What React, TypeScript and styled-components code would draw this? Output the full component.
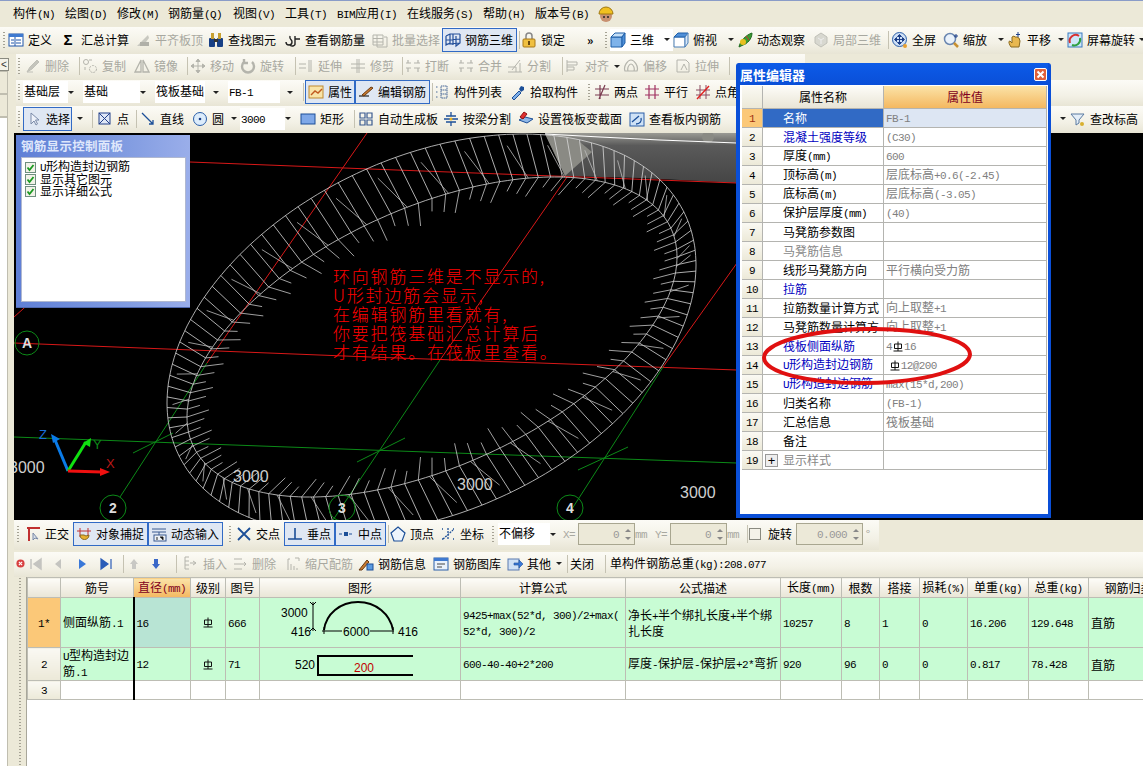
import React, { useMemo } from "react";
import styled, { createGlobalStyle } from "styled-components";

const Global = createGlobalStyle`
  html, body { margin: 0; padding: 0; background: #fff; overflow: hidden; }
  #root { width: 1143px; height: 766px; }
  * { box-sizing: border-box; }
`;

const CJK = `"Noto Sans CJK SC", "Liberation Sans", sans-serif`;

const Page = styled.div`
  position: relative; width: 1143px; height: 766px; overflow: hidden;
  background: #ece9d8; font: 12px/14px ${CJK}; color: #000;
  border-top: 1px solid #8a9cc8;
`;
const Latin = styled.span`
  font-family: "Liberation Mono", monospace; font-size: 11px; letter-spacing: -0.6px;
`;
const Label = ({ t }: { t: string }) => (
  <span>
    {t.split(/([\x20-\x7e]+)/).map((p, i) => (i % 2 ? <Latin key={i}>{p}</Latin> : p))}
  </span>
);

const MenuBar = styled.div`display: flex; align-items: center; height: 26px; padding-left: 13px;`;
const MenuItem = styled.div<{ $w: number }>`width: ${p => p.$w}px; white-space: nowrap; flex: none;`;

const Bar = styled.div<{ $h?: number; $w?: number; $ml?: number }>`
  display: flex; align-items: center; flex: none; white-space: nowrap;
  height: ${p => p.$h ?? 26}px; padding-bottom: 2px;
  width: ${p => (p.$w ? `${p.$w}px` : "auto")};
  margin-left: ${p => p.$ml ?? 0}px;
  background: linear-gradient(#fcfbf6, #f3f1e6 60%, #e8e5d5);
`;
const Grip = styled.div<{ $w: number; $x?: number }>`
  flex: none; width: ${p => p.$w}px; height: 18px; margin: 0;
  background: radial-gradient(circle, #a5a294 0.9px, transparent 1.1px) ${p => p.$x ?? 2}px 0 / 2px 3px repeat-y;
`;
const Sep = styled.div<{ $w: number }>`
  flex: none; width: ${p => p.$w}px; height: 18px; position: relative;
  &::after { content: ""; position: absolute; left: 45%; top: 0; bottom: 0; width: 1px; background: #c5c2b2; }
`;
const Tool = styled.div<{ $w: number; $on?: boolean; $off?: boolean }>`
  flex: none; display: flex; align-items: center; gap: 4px;
  width: ${p => p.$w}px; height: ${p => (p.$on ? 24 : 22)}px;
  padding-left: ${p => (p.$on ? 3 : 0)}px; padding-right: 3px;
  color: ${p => (p.$off ? "#a8a8a0" : "#000")};
  ${p => p.$on && "border: 1px solid #316ac5; background: #dfe7f3; padding-left: 2px;"}
`;
const Caret = styled.i`
  flex: none; margin-left: auto; width: 0; height: 0;
  border-left: 3px solid transparent; border-right: 3px solid transparent; border-top: 3px solid #222;
`;
const CaretSlot = styled.div<{ $w: number }>`
  flex: none; display: flex; justify-content: center; width: ${p => p.$w}px;
`;
const Combo = styled.div<{ $w: number }>`
  flex: none; display: flex; align-items: center; width: ${p => p.$w}px; height: 22px; padding-right: 9px;
`;
const ComboBox = styled.div<{ $w: number }>`
  flex: none; width: ${p => p.$w}px; height: 22px; background: #fff; padding: 3px 0 0 1px;
`;
const Fill = styled.div`flex: 1;`;
const Body = styled.div`display: flex;`;
const Dock = styled.div`
  flex: none; width: 14px; height: 712px; position: relative; padding-top: 4px;
  border: 0;
`;
const DockBtn = styled.div`
  width: 9px; height: 13px; border: 1px solid #8a8a80; border-left: 0; font: 10px/11px "Liberation Sans", sans-serif;
  text-align: center; color: #333; background: #f4f2e8;
`;
const DockTab = styled.div<{ $h: number; $bg: string }>`
  width: 8px; height: ${p => p.$h}px; background: ${p => p.$bg}; border: 1px solid #c0beb0; border-left: 0; border-top-width: 1px;
`;
const Main = styled.div`flex: 1; min-width: 0; display: flex; flex-direction: column;`;
const Canvas = styled.div`position: relative; flex: none; height: 387px; background: #000; overflow: hidden;`;
const CanvasSvg = styled.svg`display: block; width: 100%; height: 100%;`;
const Note = styled.div`
  position: absolute; left: 319px; top: 133px; color: #f00; font: 300 17px/19px ${CJK};
  letter-spacing: 1.8px; white-space: pre;
`;
const Panel = styled.div`
  position: absolute; left: 2px; top: 2px; width: 174px; height: 173px;
  background: linear-gradient(90deg, #5f7fd6, #7f9ae0 60%, #9aaeea); padding: 0 4px 5px 5px;
  border-bottom: 1px solid #4f68b0; display: flex; flex-direction: column;
`;
const PanelTitle = styled.div`
  height: 22px; font: 700 12.5px/22px ${CJK}; color: #dfe7fb; letter-spacing: 0.3px; padding-left: 0;
`;
const PanelBody = styled.div`
  flex: 1; background: #fff; border: 1px solid #b0b8d0; padding: 3px 0 0 3px;
`;
const CheckRow = styled.div`
  display: flex; align-items: center; gap: 4px; height: 12px; white-space: nowrap;
  & > span { display: block; line-height: 12px; }
`;
const Check = styled.div`
  flex: none; width: 11px; height: 11px; border: 1px solid #6f8f7f; background: #f2f2e8;
  display: flex; align-items: center; justify-content: center;
`;

const Spin = styled.div<{ $w: number }>`
  flex: none; display: flex; align-items: center; justify-content: flex-end; width: ${p => p.$w}px; height: 22px;
  border: 1px solid #a8a690; background: #ece9d8; color: #999; padding-right: 3px; gap: 6px;
`;
const SpinArrows = styled.div`display: flex; flex-direction: column; gap: 5px;`;
const Up = styled.i`width: 0; height: 0; border-left: 3px solid transparent; border-right: 3px solid transparent; border-bottom: 3px solid #888;`;
const Dn = styled.i`width: 0; height: 0; border-left: 3px solid transparent; border-right: 3px solid transparent; border-top: 3px solid #888;`;
const Faint = styled.div<{ $w: number }>`flex: none; width: ${p => p.$w}px; color: #a8a8a0;`;
const Box = styled.div`flex: none; width: 12px; height: 12px; border: 1px solid #8a8a80; background: #f4f2e8; margin-right: 7px;`;

const TablePane = styled.div`display: flex; flex: 1; min-height: 0; background: #fff;`;
const TableGrip = styled.div`
  flex: none; width: 13px; background: #ece9d8 radial-gradient(circle, #a5a294 0.9px, transparent 1.1px) 5px 0 / 2px 3px repeat-y;
  border-right: 1px solid #a9a79a;
`;
const Sheet = styled.table`
  table-layout: fixed; border-collapse: collapse; width: 1141px; flex: none; height: 121px;
  font-size: 12px; line-height: 13px;
  th, td { border: 1px solid #bdbdb4; padding: 0 2px; overflow: hidden; white-space: nowrap; font-weight: 400; }
`;
const Head = styled.th<{ $hot?: boolean }>`
  height: 20px; text-align: center;
  background: ${p => (p.$hot ? "linear-gradient(#fbe3a8, #f4b860)" : "linear-gradient(#fdfcf8, #e9e5d6)")};
  color: ${p => (p.$hot ? "#800020" : "#000")};
`;
const Num = styled.td<{ $hot?: boolean }>`
  text-align: center;
  background: ${p => (p.$hot ? "#fbc878" : "linear-gradient(#faf9f3, #ece9d8)")};
`;
const Cell = styled.td<{ $bg?: string; $center?: boolean; $freeze?: boolean }>`
  background: ${p => p.$bg ?? "#c8fcd4"};
  text-align: ${p => (p.$center ? "center" : "left")};
  ${p => p.$freeze && "border-left: 2px solid #000 !important;"}
`;
const ShapeSvg = styled.svg`display: block; width: 201px; margin-left: -2px;`;

const Win = styled.div`
  position: absolute; left: 736px; top: 62px; width: 315px; height: 455px;
  background: #0a4fd8; border: 4px solid #0a4fd8; border-top: 0; border-radius: 3px 3px 0 0; border-right-width: 3px;
  display: flex; flex-direction: column;
`;
const WinTitle = styled.div`
  flex: none; height: 22px; display: flex; align-items: center; justify-content: space-between;
  background: linear-gradient(#0c5be8, #0a4fd8); color: #fff; font: 700 13px/22px ${CJK}; padding-right: 1px; padding-top: 1px;
`;
const WinClose = styled.div`
  width: 13px; height: 13px; border: 1px solid #fff; border-radius: 2px; background: #e2603a; position: relative;
`;
const WinBody = styled.div`flex: 1; background: #fff; padding: 1px 2px 0 2px;`;
const PropRow = styled.div<{ $h?: number }>`
  display: grid; grid-template-columns: 21px 121px 163px; height: ${p => p.$h ?? 19}px; width: 305px;
`;
const PropCell = styled.div<{ $bg?: string; $c?: string; $pl?: number; $center?: boolean }>`
  border-right: 1px solid #b4b4b0; border-bottom: 1px solid #b4b4b0; white-space: nowrap; overflow: hidden;
  line-height: 18px; display: flex; align-items: center; 
  justify-content: ${p => (p.$center ? "center" : "flex-start")};
  background: ${p => p.$bg ?? "#fff"}; color: ${p => p.$c ?? "#000"}; padding-left: ${p => p.$pl ?? 0}px;
`;
const Plus = styled.div`
  width: 13px; height: 13px; margin-left: -18px; margin-right: 5px; border: 1px solid #999; background: #eee;
  font: 13px/11px "Liberation Sans", sans-serif; text-align: center; color: #000;
`;
const Oval = styled.svg`position: absolute; left: 755px; top: 318px; width: 225px; height: 75px; pointer-events: none;`;
const Glyphs = styled.span`display: inline-flex; align-items: center; gap: 1px;`;

const Rebar = () => (
  <svg width="10" height="11" viewBox="0 0 10 11" style={{ display: "block" }}>
    <path d="M1.500 3h7v4.500h-7zM5 0.500V10M0.500 10h9" fill="none" stroke="#111" strokeWidth="1" />
  </svg>
);

const sw = { fill: "none", strokeWidth: 1 } as const;
function icon(n: string): React.ReactNode {
  const g = "#b4b4ac";
  switch (n) {
    case "def": return <><rect x="1" y="2" width="14" height="12" fill="#fff" stroke="#1f55a8" /><rect x="1" y="2" width="14" height="3" fill="#3f7ad0" /><path d="M3 8h3M3 11h3M8 8h5M8 11h5M7 5v9" stroke="#1f55a8" /></>;
    case "flush": return <><path d="M2 14 13 3l1 3-6 8z" fill="#c8c8c0" /><rect x="5" y="10" width="9" height="4" fill="#b0b0a8" /></>;
    case "binoc": return <><rect x="1" y="6" width="6" height="9" rx="1" fill="#173f85" /><rect x="9" y="6" width="6" height="9" rx="1" fill="#173f85" /><rect x="3" y="1" width="3" height="6" fill="#c8a030" /><rect x="10" y="1" width="3" height="6" fill="#c8a030" /><rect x="6" y="7" width="4" height="3" fill="#333" /></>;
    case "look": return <path d="M1 10a3 3 0 1 0 6 0c0-3-3-2-2-6M10 4v7a2.500 2.500 0 0 1-5 1M10 7h5" {...sw} stroke="#222" strokeWidth={1.4} />;
    case "batch": return <path d="M1 3h10v10H1zM1 6.500h10M1 10h10M5 3v10M12 5h3v10H5v-2" {...sw} stroke={g} />;
    case "grid3": return <path d="M1 4 5 2h10M1 4v9l4-2V2M1 8l14-1M1 12l14-1M15 2v9L11 14V4M8 2v11" {...sw} stroke="#234f9a" strokeWidth={1.2} />;
    case "lock": return <><path d="M5 7V4a3 3 0 0 1 6 0v3" {...sw} stroke="#888" strokeWidth={1.5} /><rect x="2" y="7" width="12" height="8" rx="1" fill="#f0c040" stroke="#a87818" /><rect x="7" y="9" width="2" height="4" fill="#6a4a10" /></>;
    case "cube": return <><path d="M1 5h11v10H1z" fill="#7fb3ea" stroke="#1f5fa8" /><path d="M1 5l4-4h10L12 5z" fill="#c6e0f8" stroke="#1f5fa8" /><path d="M12 5l3-4v10l-3 4z" fill="#4f8fd8" stroke="#1f5fa8" /></>;
    case "cube2": return <><path d="M1 5h11v10H1z" fill="#fff" stroke="#4a7fb8" /><path d="M1 5l4-4h10L12 5z" fill="#4f8fd8" stroke="#1f5fa8" /><path d="M12 5l3-4v10l-3 4z" fill="#d8e8f8" stroke="#4a7fb8" /></>;
    case "orbit": return <><path d="M2 15C3 9 9 3 15 1c0 6-5 11-9 12z" fill="#3c9a30" stroke="#1f6a20" /><circle cx="6" cy="10" r="3" fill="#e8c020" /><path d="M9 4l3 4" stroke="#c33" /></>;
    case "part": return <><path d="M8 1l6 4v6l-6 4-6-4V5z" fill="#d8d8d0" stroke="#c0c0b8" /><path d="M5 6l3 2 3-2M8 8v4" {...sw} stroke="#eee" /></>;
    case "full": return <><circle cx="7.500" cy="7.500" r="7" fill="#cfe0f5" stroke="#2a5ea8" /><path d="M7.500 3v9M3 7.500h9M7.500 2.500l-2 2h4zM7.500 12.500l-2-2h4zM2.500 7.500l2-2v4zM12.500 7.500l-2-2v4z" fill="#1c3f88" stroke="#1c3f88" /><circle cx="13" cy="14" r="2" fill="#e8a030" /></>;
    case "zoom": return <><circle cx="7" cy="7" r="5.500" fill="#eaf2fb" stroke="#6a86b0" strokeWidth={1.5} /><path d="M11 11l4 4" stroke="#c89030" strokeWidth={2.5} /><path d="M13 2v4M11 4h4" stroke="#1c3f88" /></>;
    case "pan": return <><path d="M4 15c-2-3-3-6-1-6l2 2V5l2-1 1 1 2 0 2 1 1 3-1 6z" fill="#e8b850" stroke="#8a6a20" /><path d="M11 0v5M9 2.500h4" stroke="#1c3f88" /></>;
    case "rot3": return <><rect x="1" y="1" width="14" height="14" fill="#cfe6f8" stroke="#3a7ac0" /><path d="M3 11A6 6 0 0 1 12 4" {...sw} stroke="#d83030" strokeWidth={2} /><path d="M13 6a6 6 0 0 1-8 7" {...sw} stroke="#30a040" strokeWidth={2} /></>;
    case "erase": return <path d="M2 14l3-5 7-7 2 2-7 7zM2 14h6" fill="#c4c4bc" stroke="#c0c0b8" />;
    case "copy": return <><circle cx="4" cy="4" r="2.500" {...sw} stroke={g} /><circle cx="11" cy="11" r="3.500" {...sw} stroke={g} strokeDasharray="2 1" /><path d="M7 2h3M3 9v3" {...sw} stroke={g} /></>;
    case "mirror": return <path d="M7 2 1 14h6zM9 2l6 12H9z" {...sw} stroke={g} strokeWidth={1.3} />;
    case "move": return <path d="M8 1v14M1 8h14M8 1 6 3.500h4zM8 15l-2-2.500h4zM1 8l2.500-2v4zM15 8l-2.500-2v4z" fill={g} stroke={g} />;
    case "rot": return <path d="M12 4A6 6 0 1 1 4 4M4 1v4h4" {...sw} stroke={g} strokeWidth={2.4} />;
    case "extend": return <path d="M1 6h7M1 10h7M11 2v12M13 2v12" {...sw} stroke={g} />;
    case "trim": return <path d="M1 6h14M1 10h14M7 1v14M9 1v14" {...sw} stroke={g} />;
    case "break": return <path d="M1 5h5M9 5h6M1 10h5M9 10h6M3 2v3M13 2v3M3 10v4M13 10v4" {...sw} stroke={g} strokeWidth={1.2} />;
    case "split": return <path d="M1 14h14M1 9h8M13 2l-8 10M9 14v-5M13 5v9" {...sw} stroke={g} />;
    case "align": return <path d="M2 2v12M2 4h10v3H2M2 9h7v3H2" {...sw} stroke={g} />;
    case "offset": return <path d="M2 13c-2-5 3-11 6-11s8 6 6 11zM5 13c-1-3 1-7 3-7s4 4 3 7z" {...sw} stroke={g} strokeWidth={1.2} />;
    case "stretch": return <path d="M2 2h9l3 3v9H2zM6 12l3-6 3 6" {...sw} stroke={g} />;
    case "prop": return <><rect x="1" y="2" width="14" height="12" fill="#f8e4a8" stroke="#c08a30" /><path d="M3 11l4-4 3 2 4-4" {...sw} stroke="#c05a20" strokeWidth={1.4} /></>;
    case "edit": return <><path d="M1 12h10" stroke="#222" strokeWidth={1.2} /><path d="M4 11 13 3l2 1-9 8z" fill="#c97a30" stroke="#6a3a10" /></>;
    case "list": return <path d="M2 3h2M2 8h2M2 13h2M7 2h6v12H7zM7 6h6M7 10h6" {...sw} stroke="#4a6a98" strokeDasharray="1.500 0.500" />;
    case "pick": return <><path d="M2 14l7-7 2 2-7 7z" fill="#7fb0e8" stroke="#1c4f98" /><path d="M9 5l2-3 3 1 0 3-3 2z" fill="#1c4f98" /></>;
    case "two": return <path d="M1 5h14M1 11h14M6 1v14M11 1 5 15" {...sw} stroke="#7a3a50" strokeWidth={1.2} />;
    case "par": return <path d="M1 5h14M1 11h14M5 1v14M11 1v14" {...sw} stroke="#a03060" strokeWidth={1.2} />;
    case "ang": return <><path d="M1 6h14M1 11h14M5 1v14M11 1v14" {...sw} stroke="#8a4a60" /><path d="M2 15 14 2" stroke="#e02020" strokeWidth={1.4} /></>;
    case "cursor": return <path d="M5 2v11l3-3 2 4 1.500-1-2-4h3.500z" fill="#eef2fa" stroke="#7a8aa8" />;
    case "pt": return <><rect x="2" y="2" width="11" height="11" fill="#dfe7f6" stroke="#22408a" /><path d="M2 2l11 11M13 2 2 13" stroke="#22408a" /></>;
    case "line": return <path d="M2 2l11 11M13 9v4H9" {...sw} stroke="#1c4f98" strokeWidth={1.3} />;
    case "circ": return <><circle cx="8" cy="8" r="6.500" fill="#dcecfb" stroke="#2a5ea8" /><circle cx="8" cy="8" r="1.300" fill="#1c3f88" /></>;
    case "rect": return <rect x="1" y="3" width="14" height="10" fill="#7fa8e8" stroke="#1c4f98" />;
    case "auto": return <path d="M2 2h5v5H2zM9 2h5v5H9zM2 9h5v5H2zM9 9h5v5H9z" {...sw} stroke="#3a5a90" strokeWidth={1.2} />;
    case "beam": return <><path d="M1 8h14M8 1v4M3 5h10M3 11h10M8 11v4" {...sw} stroke="#1c4f98" strokeWidth={1.3} /><circle cx="8" cy="8" r="1.500" fill="#e8b020" /></>;
    case "setv": return <><path d="M1 9l6-3 8 2-6 4z" fill="#8fb8e8" stroke="#1c4f98" /><path d="M6 1l3 2-4 5-3-2z" fill="#e03030" stroke="#901010" /></>;
    case "view": return <><rect x="1" y="2" width="14" height="13" fill="#cfe2f6" stroke="#2a5ea8" /><path d="M3 11 10 5M7 13c4 0 6-3 5-6" {...sw} stroke="#1c4f98" strokeWidth={1.3} /></>;
    case "level": return <><path d="M1 3h13L9 9v3l-3 2V9z" fill="#e4eef8" stroke="#5a7aa0" /><circle cx="12" cy="13" r="2" fill="#d8b030" /></>;
    case "ortho": return <><path d="M2 2h13M4 2v13" stroke="#c03030" strokeWidth={2} /><path d="M8 7v7l2-2 3 1z" fill="#d8e0ea" stroke="#7a8aa8" /></>;
    case "snap": return <><path d="M4 2v9M12 2v9M1 5h14" stroke="#c03030" /><path d="M4 9c0 6 9 6 9 0l-3 1-2-1z" fill="#e8b030" stroke="#8a6a20" /></>;
    case "dyn": return <><path d="M1 3h14M1 6h14M8 6v3" stroke="#3a5a90" /><rect x="3" y="9" width="12" height="6" fill="#eef2f6" stroke="#3a5a90" /><path d="M6 11v3M9 11h3v3" stroke="#222" /></>;
    case "cross": return <path d="M2 2l12 12M14 2 2 14" {...sw} stroke="#1c4f98" strokeWidth={1.8} />;
    case "perp": return <path d="M1 13h14M8 2v11" {...sw} stroke="#1c4f98" strokeWidth={1.6} />;
    case "mid": return <><path d="M1 8h14" stroke="#1c4f98" strokeWidth={1.2} strokeDasharray="3 2" /><rect x="6" y="6" width="4" height="4" fill="#1c4f98" /></>;
    case "top": return <path d="M8 1l7 6-3 8H4L1 7z" fill="#eef5fc" stroke="#1c4f98" strokeWidth={1.2} />;
    case "coord": return <path d="M2 3h1M13 3h1M2 13h1M13 13h1M8 2v12M3 13 13 4" {...sw} stroke="#1c4f98" strokeDasharray="2 1" strokeWidth={1.3} />;
    case "first": return <path d="M3 3v10M13 3 6 8l7 5z" fill="#c4c4c0" stroke="#c4c4c0" strokeWidth={1.5} />;
    case "prev": return <path d="M11 3 5 8l6 5z" fill="#c4c4c0" />;
    case "next": return <path d="M5 3l7 5-7 5z" fill="#3a78d8" />;
    case "last": return <path d="M13 3v10M3 3l7 5-7 5z" fill="#2a5cb8" stroke="#2a5cb8" strokeWidth={1.2} />;
    case "up": return <path d="M8 3l4 5h-2v5H6V8H4z" fill="#c8c8c4" />;
    case "down": return <path d="M8 13l4-5h-2V3H6v5H4z" fill="#3a68c8" />;
    case "ins": return <path d="M2 1h4M2 5h4M2 9h4M2 13h4M2 1v12M7 7h5M10 5l3 2-3 2" {...sw} stroke={g} />;
    case "del": return <path d="M2 3h8M2 8h8M2 13h8M10 8h4M12 6l2 2-2 2" {...sw} stroke={g} />;
    case "scale": return <path d="M3 14V3h2M6 14V8M9 14V10M12 14v-2M10 2h4v3" {...sw} stroke={g} />;
    case "info": return <><path d="M1 14 9 4l2 2-7 8z" fill="#c97a30" stroke="#6a3a10" /><rect x="9" y="8" width="6" height="6" fill="#5a9ae0" stroke="#1c4f98" /></>;
    case "lib": return <><rect x="1" y="2" width="14" height="12" fill="#eaf2fb" stroke="#2a5ea8" /><rect x="1" y="2" width="14" height="3" fill="#3f7ad0" /><path d="M4 8h8M4 11h5" stroke="#444" /></>;
    case "other": return <><rect x="1" y="3" width="11" height="11" fill="#cfe0f5" stroke="#5a7ab0" /><path d="M7 7h5V4l4 4-4 4V9H7z" fill="#3a78d8" stroke="#1c4f98" strokeWidth={0.6} /></>;
    default: return null;
  }
}
const IconSvg = styled.svg`flex: none; display: block;`;
const Icon = ({ n, s = 16 }: { n: string; s?: number }) => (
  <IconSvg width={s} height={s} viewBox="0 0 16 16">{icon(n)}</IconSvg>
);

type TI = { i?: string; t?: string; w: number; on?: boolean; off?: boolean; caret?: boolean; sigma?: boolean };
const SigmaMark = styled.b`flex: none; width: 12px; padding-left: 0; margin-right: 3px; font: 700 15px/16px "Liberation Sans", sans-serif; text-align: center;`;
const T = ({ i, t, w, on, off, caret, sigma }: TI) => (
  <Tool $w={w} $on={on} $off={off}>
    {sigma ? <SigmaMark>Σ</SigmaMark> : i && <Icon n={i} />}
    {t && <Label t={t} />}
    {caret && <Caret />}
  </Tool>
);

const outer = (t: number) => [431.5 + 264.5 * Math.cos(t), 334 - 69 * Math.cos(t) + 187.7 * Math.sin(t)];
const inner = (t: number) => [432 + 245 * Math.cos(t), 337 - 80 * Math.cos(t) + 138.6 * Math.sin(t)];
const f1 = (v: number) => v.toFixed(1);

const Ring = () => {
  const d = useMemo(() => {
    const ell = (fn: (t: number) => number[]) => {
      const a: string[] = [];
      for (let k = 0; k < 240; k++) {
        const p = fn((k / 240) * Math.PI * 2);
        a.push(`${f1(p[0])},${f1(p[1])}`);
      }
      return a.join(" ");
    };
    const N = 112, delta = 0.08, step = (Math.PI * 2) / N;
    let hatch = "", vee = "", tick = "";
    for (let i = 0; i < N; i++) {
      const t = i * step;
      const q = inner(t), p = outer(t - delta);
      hatch += `M${f1(p[0])} ${f1(p[1])}L${f1(q[0])} ${f1(q[1])}`;
      if (i % 3 === 0) {
        const r = inner(t + step * 1.2), s = outer(t - delta + step * 0.1);
        const mx = s[0] * 0.75 + r[0] * 0.25, my = s[1] * 0.75 + r[1] * 0.25;
        vee += `M${f1(mx)} ${f1(my)}L${f1(r[0])} ${f1(r[1])}`;
      }
      const dx = 432 - q[0], dy = 337 - q[1], l = Math.hypot(dx, dy), L = 13 + (i % 3) * 5;
      tick += `M${f1(q[0])} ${f1(q[1])}l${f1((dx / l) * L)} ${f1((dy / l) * L)}`;
    }
    return { o: ell(outer), n: ell(inner), hatch, vee, tick };
  }, []);
  return (
    <g fill="none" stroke="#d8d8d8" strokeWidth="0.8">
      <polygon points={d.o} />
      <polygon points={d.n} />
      <path d={d.hatch} />
      <path d={d.vee} stroke="#bdbdbd" />
      <path d={d.tick} stroke="#c8c8c8" />
    </g>
  );
};

const GRID_RED = ["M14 343L370 357L737 370", "M190 162L370 169L737 183", "M367 133L207 363", "M190 160L14 317", "M567 177L440 360", "M737 263L663 367"];
const GRID_GREEN = ["M14 437L370 450L737 463", "M207 363L120 497", "M440 360L333 520", "M663 367L570 512", "M133 453L173 433", "M357 462L405 438", "M578 470L628 447"];

const Scene = () => (
  <CanvasSvg viewBox="14 133 1129 387">
    <defs>
      <linearGradient id="wedge" x1="0" y1="0" x2="0" y2="1">
        <stop offset="0" stopColor="#9a9a94" />
        <stop offset="0.25" stopColor="#5a5a5a" />
        <stop offset="1" stopColor="#454545" />
      </linearGradient>
    </defs>
    <polygon points="545,133 740,133 740,183 640,178 565,176" fill="url(#wedge)" />
    <polygon points="545,134 575,138 592,152 565,176" fill="#8a8a84" />
    <circle cx="708" cy="137" r="6" fill="#8a8a84" />
    <path d="M545 134L600 137L660 140L737 143" stroke="#fff" fill="none" strokeWidth="1.2" />
    <path d={GRID_RED.join("")} stroke="#d81818" fill="none" strokeWidth="1" />
    <path d={GRID_GREEN.join("")} stroke="#0c8a18" fill="none" strokeWidth="1" />
    <Ring />
    <g fill="none" stroke="#0c8a18">
      <circle cx="27" cy="343" r="12" />
      <circle cx="113" cy="508" r="13" />
      <circle cx="342" cy="508" r="13" />
      <circle cx="570" cy="508" r="13" />
    </g>
    <g fill="#ddd" fontFamily="Liberation Sans, sans-serif" fontWeight="700" fontSize="14" textAnchor="middle">
      <text x="27" y="348">A</text>
      <text x="113" y="513">2</text>
      <text x="342" y="513">3</text>
      <text x="570" y="513">4</text>
    </g>
    <g fill="#cfcfcf" fontFamily="Liberation Sans, sans-serif" fontSize="16">
      <text x="9" y="473">3000</text>
      <text x="233" y="482">3000</text>
      <text x="457" y="490">3000</text>
      <text x="680" y="498">3000</text>
    </g>
    <g fill="none" strokeWidth="3">
      <path d="M68 471L55 440" stroke="#0a7be8" />
      <path d="M68 471L86 442" stroke="#10e010" />
      <path d="M68 471L102 472" stroke="#f01010" />
    </g>
    <path d="M51 434l9 5-7 4z" fill="#0a7be8" />
    <path d="M91 438l-1 9-7-4z" fill="#10e010" />
    <path d="M110 472l-10-4v8z" fill="#f01010" />
    <g fontFamily="Liberation Sans, sans-serif" fontSize="13">
      <text x="39" y="439" fill="#1a6ed8">Z</text>
      <text x="93" y="449" fill="#0c8a18">Y</text>
      <text x="106" y="468" fill="#b81818">X</text>
    </g>
  </CanvasSvg>
);

const MENU: [string, number][] = [["构件(N)",52],["绘图(D)",52],["修改(M)",51],["钢筋量(Q)",65],["视图(V)",52],["工具(T)",52],["BIM应用(I)",70],["在线服务(S)",76],["帮助(H)",52],["版本号(B)",62]];
const Helmet = () => (
  <svg width="18" height="18" viewBox="0 0 18 18"><circle cx="9" cy="11" r="6" fill="#c89070" /><path d="M2 9a7 7 0 0 1 14 0z" fill="#f0c020" stroke="#a07810" /><circle cx="7" cy="12" r="1" fill="#222" /><circle cx="11" cy="12" r="1" fill="#222" /></svg>
);

const ROW1: TI[] = [
  { i: "def", t: "定义", w: 54 }, { sigma: true, t: "汇总计算", w: 73 }, { i: "flush", t: "平齐板顶", w: 73, off: true },
  { i: "binoc", t: "查找图元", w: 77 }, { i: "look", t: "查看钢筋量", w: 87 }, { i: "batch", t: "批量选择", w: 70, off: true },
];
const ROW1B: TI[] = [
  { i: "cube2", t: "俯视", w: 64, caret: true }, { i: "orbit", t: "动态观察", w: 76 }, { i: "part", t: "局部三维", w: 72, off: true },
];
const ROW1C: TI[] = [
  { i: "full", t: "全屏", w: 51 }, { i: "zoom", t: "缩放", w: 64, caret: true }, { i: "pan", t: "平移", w: 60, caret: true }, { i: "rot3", t: "屏幕旋转", w: 76, caret: true },
];
const WhiteTool = styled(Tool)`background: #fff; `;

const PROPS: { n: string; v?: string; c?: string; r?: React.ReactNode }[] = [
  { n: "名称", v: "FB-1" }, { n: "混凝土强度等级", v: " (C30)", c: "#0000c0" }, { n: "厚度(mm)", v: "600" },
  { n: "顶标高(m)", v: "层底标高+0.6(-2.45)" }, { n: "底标高(m)", v: "层底标高(-3.05)" }, { n: "保护层厚度(mm)", v: " (40)" },
  { n: "马凳筋参数图" }, { n: "马凳筋信息", c: "#888" }, { n: "线形马凳筋方向", v: "平行横向受力筋" }, { n: "拉筋", c: "#0000c0" },
  { n: "拉筋数量计算方式", v: "向上取整+1" }, { n: "马凳筋数量计算方", v: "向上取整+1" },
  { n: "筏板侧面纵筋", c: "#0000c0", r: <Glyphs><Label t="4" /><Rebar /><Label t="16" /></Glyphs> },
  { n: "U形构造封边钢筋", c: "#0000c0", r: <Glyphs>&nbsp;<Rebar /><Label t="12@200" /></Glyphs> },
  { n: "U形构造封边钢筋", v: "max(15*d,200)", c: "#0000c0" },
  { n: "归类名称", v: " (FB-1)" }, { n: "汇总信息", v: "筏板基础" }, { n: "备注" }, { n: "显示样式", c: "#888" },
];
const COLS = [33, 73, 57, 35, 34, 201, 165, 155, 61, 38, 40, 48, 61, 60, 80];
const HEADS = ["", "筋号", "直径(mm)", "级别", "图号", "图形", "计算公式", "公式描述", "长度(mm)", "根数", "搭接", "损耗(%)", "单重(kg)", "总重(kg)", "钢筋归类"];

const ShapeText = styled.text`font: 12px "Liberation Sans", sans-serif;`;

export default function App() {
  return (
    <Page>
      <Global />
      <MenuBar>
        {MENU.map(([t, w]) => <MenuItem key={t} $w={w}><Label t={t} /></MenuItem>)}
        <Helmet />
      </MenuBar>
      <Bar $h={27}>
        <Grip $w={8} $x={3} />
        {ROW1.map(x => <T key={x.t} {...x} />)}
        <T i="grid3" t="钢筋三维" w={75} on />
        <Sep $w={4} />
        <T i="lock" t="锁定" w={66} />
        <Tool $w={16}><b>»</b></Tool>
        <Grip $w={7} $x={2} />
        <WhiteTool $w={63}><Icon n="cube" /><Label t="三维" /><Caret /></WhiteTool>
        {ROW1B.map(x => <T key={x.t} {...x} />)}
        <Sep $w={7} />
        {ROW1C.map(x => <T key={x.t} {...x} />)}
      </Bar>
      <Body>
        <Dock>
          <DockBtn>&lt;</DockBtn>
          <DockTab $h={23} $bg="#ece9d8" />
          <DockTab $h={23} $bg="#ece9d8" />
          <DockTab $h={660} $bg="#fff" />
        </Dock>
        <Main>
          <Bar $w={789} $ml={2}>
            <Grip $w={9} $x={2} />
            <T i="erase" t="删除" w={51} off /><Sep $w={6} />
            <T i="copy" t="复制" w={52} off /><T i="mirror" t="镜像" w={50} off /><Sep $w={6} />
            <T i="move" t="移动" w={50} off /><T i="rot" t="旋转" w={52} off /><Sep $w={6} />
            <T i="extend" t="延伸" w={52} off /><T i="trim" t="修剪" w={50} off /><Sep $w={5} />
            <T i="break" t="打断" w={53} off /><T i="break" t="合并" w={49} off /><T i="split" t="分割" w={53} off /><Sep $w={5} />
            <T i="align" t="对齐" w={58} off caret /><T i="offset" t="偏移" w={52} off /><T i="stretch" t="拉伸" w={52} off /><Sep $w={5} />
          </Bar>
          <Bar $ml={2}>
            <Grip $w={7} $x={2} />
            <Combo $w={60}><ComboBox $w={45}><Label t="基础层" /></ComboBox><Caret /></Combo>
            <Combo $w={72}><ComboBox $w={57}><Label t="基础" /></ComboBox><Caret /></Combo>
            <Combo $w={73}><ComboBox $w={50}><Label t="筏板基础" /></ComboBox><Caret /></Combo>
            <Combo $w={74}><ComboBox $w={52}><Label t="FB-1" /></ComboBox><Caret /></Combo>
            <Sep $w={3} />
            <T i="prop" t="属性" w={50} on /><T i="edit" t="编辑钢筋" w={75} on /><Sep $w={4} />
            <T i="list" t="构件列表" w={76} /><T i="pick" t="拾取构件" w={75} />
            <Grip $w={9} $x={3} />
            <T i="two" t="两点" w={50} /><T i="par" t="平行" w={51} /><T i="ang" t="点角" w={50} />
          </Bar>
          <Bar $h={27} $ml={2}>
            <Grip $w={7} $x={2} />
            <T i="cursor" t="选择" w={49} on />
            <CaretSlot $w={16}><Caret style={{ margin: 0 }} /></CaretSlot>
            <Sep $w={9} />
            <T i="pt" t="点" w={36} /><Sep $w={7} />
            <T i="line" t="直线" w={52} /><T i="circ" t="圆" w={48} caret />
            <Combo $w={60}><ComboBox $w={45}><Label t="3000" /></ComboBox><Caret /></Combo>
            <T i="rect" t="矩形" w={50} /><Sep $w={8} />
            <T i="auto" t="自动生成板" w={85} /><T i="beam" t="按梁分割" w={75} />
            <T i="setv" t="设置筏板变截面" w={111} /><T i="view" t="查看板内钢筋" w={95} />
            <Fill />
            <CaretSlot $w={14}><Caret style={{ margin: 0 }} /></CaretSlot>
            <T i="level" t="查改标高" w={73} />
          </Bar>
          <Canvas>
            <Scene />
            <Note>{"环向钢筋三维是不显示的,\nU形封边筋会显示,\n在编辑钢筋里看就有,\n你要把筏基础汇总计算后\n才有结果。在筏板里查看。"}</Note>
            <Panel>
              <PanelTitle>钢筋显示控制面板</PanelTitle>
              <PanelBody>
                {["U形构造封边钢筋", "显示其它图元", "显示详细公式"].map(t => (
                  <CheckRow key={t}>
                    <Check><svg width="9" height="9" viewBox="0 0 9 9"><path d="M1.500 4.500l2 2.500 4-5" fill="none" stroke="#1a9a20" strokeWidth="1.800" /></svg></Check>
                    <Label t={t} />
                  </CheckRow>
                ))}
              </PanelBody>
            </Panel>
          </Canvas>
          <Bar $h={30} $w={865}>
            <Grip $w={11} $x={3} />
            <T i="ortho" t="正交" w={48} /><T i="snap" t="对象捕捉" w={75} on /><T i="dyn" t="动态输入" w={75} on />
            <Grip $w={13} $x={6} />
            <T i="cross" t="交点" w={48} /><T i="perp" t="垂点" w={51} on /><T i="mid" t="中点" w={51} on /><Sep $w={4} />
            <T i="top" t="顶点" w={50} /><T i="coord" t="坐标" w={51} />
            <Grip $w={7} $x={1} />
            <Combo $w={65}><ComboBox $w={52}><Label t="不偏移" /></ComboBox><Caret /></Combo>
            <Faint $w={15}><Label t="X=" /></Faint>
            <Spin $w={57}><Label t="0" /><SpinArrows><Up /><Dn /></SpinArrows></Spin>
            <Faint $w={20}><Label t=" mm" /></Faint>
            <Faint $w={15}><Label t="Y=" /></Faint>
            <Spin $w={57}><Label t="0" /><SpinArrows><Up /><Dn /></SpinArrows></Spin>
            <Faint $w={18}><Label t=" mm" /></Faint>
            <Sep $w={4} />
            <Box />
            <Tool $w={28}><Label t="旋转" /></Tool>
            <Spin $w={67}><Label t="0.000" /><SpinArrows><Up /><Dn /></SpinArrows></Spin>
            <Faint $w={10}>&nbsp;°</Faint>
          </Bar>
          <Bar $h={25} style={{ marginTop: 2 }}>
            <Tool $w={14}><svg width="11" height="11" viewBox="0 0 11 11" style={{ marginLeft: 2 }}><circle cx="5.500" cy="5.500" r="5" fill="#d84040" /><path d="M3.500 3.500l4 4M7.500 3.500l-4 4" stroke="#fff" strokeWidth="1.300" /></svg></Tool>
            <T i="first" w={22} off /><T i="prev" w={24} off /><T i="next" w={24} /><T i="last" w={22} />
            <Sep $w={6} />
            <T i="up" w={22} off /><T i="down" w={22} />
            <Sep $w={13} />
            <T i="ins" t="插入" w={49} off /><T i="del" t="删除" w={53} off /><T i="scale" t="缩尺配筋" w={73} off />
            <T i="info" t="钢筋信息" w={75} /><T i="lib" t="钢筋图库" w={74} /><T i="other" t="其他" w={58} caret />
            <Sep $w={5} />
            <Tool $w={30}><Label t="关闭" /></Tool>
            <Sep $w={10} />
            <Tool $w={260}><Label t="单构件钢筋总重(kg):208.077" /></Tool>
          </Bar>
          <TablePane>
            <TableGrip />
            <Sheet>
              <colgroup>{COLS.map((w, i) => <col key={i} style={{ width: w }} />)}</colgroup>
              <thead>
                <tr>{HEADS.map((h, i) => <Head key={i} $hot={i === 2}><Label t={h} /></Head>)}</tr>
              </thead>
              <tbody>
                <tr style={{ height: 49 }}>
                  <Num $hot><Label t="1*" /></Num>
                  <Cell><Label t="侧面纵筋.1" /></Cell>
                  <Cell $bg="#b8e4d4" $freeze><Label t="16" /></Cell>
                  <Cell $center><Glyphs><Rebar /></Glyphs></Cell>
                  <Cell><Label t="666" /></Cell>
                  <Cell>
                    <ShapeSvg height="49" viewBox="0 0 201 49">
                      <ShapeText x="21" y="19">3000</ShapeText>
                      <ShapeText x="31" y="38">416</ShapeText>
                      <path d="M53 4V33M50 4l3 3 3-3M50 33l3-3 3 3" fill="none" stroke="#000" />
                      <path d="M64 32C66 16 80 4 98 4S130 16 133 32" fill="none" stroke="#000" strokeWidth="2" />
                      <path d="M62 33H82M110 33H134M64 29v7M133 29v7" fill="none" stroke="#000" />
                      <ShapeText x="83" y="38">6000</ShapeText>
                      <ShapeText x="138" y="38">416</ShapeText>
                    </ShapeSvg>
                  </Cell>
                  <Cell><Label t="9425+max(52*d, 300)/2+max(" /><br /><Label t="52*d, 300)/2" /></Cell>
                  <Cell><Label t="净长+半个绑扎长度+半个绑" /><br /><Label t="扎长度" /></Cell>
                  <Cell><Label t="10257" /></Cell><Cell><Label t="8" /></Cell><Cell><Label t="1" /></Cell><Cell><Label t="0" /></Cell>
                  <Cell><Label t="16.206" /></Cell><Cell><Label t="129.648" /></Cell><Cell><Label t="直筋" /></Cell>
                </tr>
                <tr style={{ height: 33 }}>
                  <Num><Label t="2" /></Num>
                  <Cell><Label t="U型构造封边" /><br /><Label t="筋.1" /></Cell>
                  <Cell $freeze><Label t="12" /></Cell>
                  <Cell $center><Glyphs><Rebar /></Glyphs></Cell>
                  <Cell><Label t="71" /></Cell>
                  <Cell>
                    <ShapeSvg height="32" viewBox="0 0 201 32">
                      <ShapeText x="35" y="21">520</ShapeText>
                      <path d="M153 8H58V27H153" fill="none" stroke="#000" strokeWidth="2" />
                      <ShapeText x="94" y="24" fill="#c00000">200</ShapeText>
                    </ShapeSvg>
                  </Cell>
                  <Cell><Label t="600-40-40+2*200" /></Cell>
                  <Cell><Label t="厚度-保护层-保护层+2*弯折" /></Cell>
                  <Cell><Label t="920" /></Cell><Cell><Label t="96" /></Cell><Cell><Label t="0" /></Cell><Cell><Label t="0" /></Cell>
                  <Cell><Label t="0.817" /></Cell><Cell><Label t="78.428" /></Cell><Cell><Label t="直筋" /></Cell>
                </tr>
                <tr style={{ height: 19 }}>
                  <Num><Label t="3" /></Num>
                  {COLS.slice(1).map((_, i) => <Cell key={i} $bg="#fff" $freeze={i === 1} />)}
                </tr>
              </tbody>
            </Sheet>
          </TablePane>
        </Main>
      </Body>
      <Win>
        <WinTitle>
          <span>属性编辑器</span>
          <WinClose><svg width="11" height="11" viewBox="0 0 11 11" style={{ display: "block" }}><path d="M2.500 2.500l6 6M8.500 2.500l-6 6" stroke="#fff" strokeWidth="2" /></svg></WinClose>
        </WinTitle>
        <WinBody>
          <PropRow $h={23}>
            <PropCell $bg="linear-gradient(#faf9f3, #ece9d8)" />
            <PropCell $bg="linear-gradient(#fdfcf8, #e9e5d6)" $center><Label t="属性名称" /></PropCell>
            <PropCell $bg="linear-gradient(#fbe3a8, #f4b860)" $c="#800020" $center><Label t="属性值" /></PropCell>
          </PropRow>
          {PROPS.map((r, i) => (
            <PropRow key={i}>
              <PropCell $bg={i === 0 ? "#fbc878" : "linear-gradient(#faf9f3, #ece9d8)"} $center $c={i === 0 ? "#a03010" : "#000"}><Label t={String(i + 1)} /></PropCell>
              <PropCell $pl={20} $bg={i === 0 ? "#316ac5" : "#fff"} $c={i === 0 ? "#fff" : r.c}>
                {i === 18 && <Plus>+</Plus>}
                <Label t={r.n} />
              </PropCell>
              <PropCell $pl={2} $bg={i === 0 ? "#dde6f3" : "#fff"} $c="#808080">
                {r.r ?? (r.v && <Label t={r.v} />)}
              </PropCell>
            </PropRow>
          ))}
        </WinBody>
      </Win>
      <Oval viewBox="0 0 225 75">
        <ellipse cx="112" cy="37" rx="103" ry="27" fill="none" stroke="#e01010" strokeWidth="4" transform="rotate(-1 112 37)" />
      </Oval>
    </Page>
  );
}
